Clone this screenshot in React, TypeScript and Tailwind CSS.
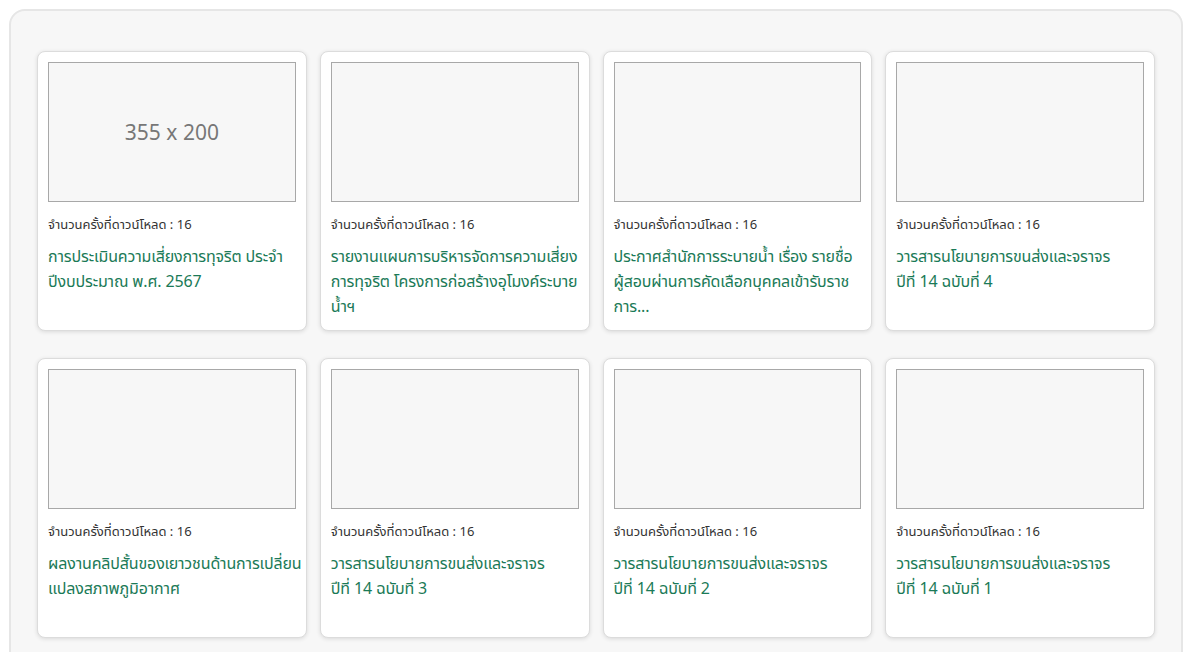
import React from 'react';

interface DocItem {
  lines: string[];
  downloads: number;
  placeholder?: boolean;
}

const items: DocItem[] = [
  { lines: ['การประเมินความเสี่ยงการทุจริต ประจำ', 'ปีงบประมาณ พ.ศ. 2567'], downloads: 16, placeholder: true },
  { lines: ['รายงานแผนการบริหารจัดการความเสี่ยง', 'การทุจริต โครงการก่อสร้างอุโมงค์ระบาย', 'น้ำฯ'], downloads: 16 },
  { lines: ['ประกาศสำนักการระบายน้ำ เรื่อง รายชื่อ', 'ผู้สอบผ่านการคัดเลือกบุคคลเข้ารับราช', 'การ...'], downloads: 16 },
  { lines: ['วารสารนโยบายการขนส่งและจราจร', 'ปีที่ 14 ฉบับที่ 4'], downloads: 16 },
  { lines: ['ผลงานคลิปสั้นของเยาวชนด้านการเปลี่ยน', 'แปลงสภาพภูมิอากาศ'], downloads: 16 },
  { lines: ['วารสารนโยบายการขนส่งและจราจร', 'ปีที่ 14 ฉบับที่ 3'], downloads: 16 },
  { lines: ['วารสารนโยบายการขนส่งและจราจร', 'ปีที่ 14 ฉบับที่ 2'], downloads: 16 },
  { lines: ['วารสารนโยบายการขนส่งและจราจร', 'ปีที่ 14 ฉบับที่ 1'], downloads: 16 },
];

function DocCard({ item }: { item: DocItem }) {
  return (
    <div className="h-[280px] bg-white rounded-lg border border-[#dcdcdc] shadow-[0_1px_4px_rgba(0,0,0,0.12)] px-[10px] pt-[10px]">
      <div className="w-full aspect-[355/200] bg-[#f7f7f7] border border-[#a8a8a8] flex items-center justify-center">
        {item.placeholder && <span className="mt-[3px] text-[21px] text-[#777]">355 x 200</span>}
      </div>
      <p className="mt-[13px] text-[13px] leading-[20px] text-[#333]">
        จำนวนครั้งที่ดาวน์โหลด : {item.downloads}
      </p>
      <div className="mt-[10px] text-[16px] leading-[25px] tracking-[-0.15px] text-[#1b7a57]">
        {item.lines.map((line, i) => (
          <div key={i} className="whitespace-nowrap">{line}</div>
        ))}
      </div>
    </div>
  );
}

export default function App() {
  return (
    <div className="min-h-screen bg-white p-[9px] font-['Noto_Sans_Thai','Noto_Sans',sans-serif]">
      <div className="bg-[#f7f7f7] border-2 border-[#e6e6e6] rounded-2xl px-[26px] pt-[40px] pb-[30px]">
        <div className="grid grid-cols-4 gap-x-[13px] gap-y-[27px]">
          {items.map((item, i) => (
            <DocCard key={i} item={item} />
          ))}
        </div>
      </div>
    </div>
  );
}
